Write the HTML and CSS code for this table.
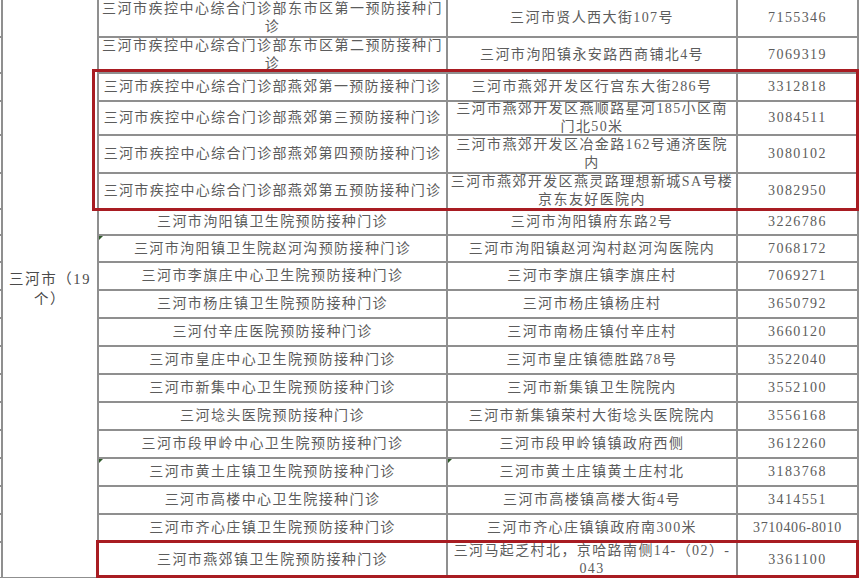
FILE: index.html
```html
<!DOCTYPE html>
<html lang="zh-CN">
<head>
<meta charset="utf-8">
<title>三河市预防接种门诊</title>
<link rel="stylesheet" href="styles.css">
</head>
<body>
<div class="page">
  <table class="grid">
    <colgroup>
      <col class="c0"><col class="c1"><col class="c2"><col class="c3"><col class="c4">
    </colgroup>
    <tbody>
      <tr class="h38"><td class="stub"></td><td class="region" rowspan="19">三河市（19<br>个）</td><td class="wide"><span class="two">三河市疾控中心综合门诊部东市区第一预防接种门<br>诊</span></td><td>三河市贤人西大街107号</td><td>7155346</td></tr>
      <tr class="h36"><td class="stub"></td><td class="wide"><span class="two">三河市疾控中心综合门诊部东市区第二预防接种门<br>诊</span></td><td>三河市泃阳镇永安路西商铺北4号</td><td>7069319</td></tr>
      <tr class="h28"><td class="stub"></td><td class="tight">三河市疾控中心综合门诊部燕郊第一预防接种门诊</td><td>三河市燕郊开发区行宫东大街286号</td><td>3312818</td></tr>
      <tr class="h34"><td class="stub"></td><td class="tight">三河市疾控中心综合门诊部燕郊第三预防接种门诊</td><td><span class="two">三河市燕郊开发区燕顺路星河185小区南<br>门北50米</span></td><td>3084511</td></tr>
      <tr class="h38"><td class="stub"></td><td class="tight">三河市疾控中心综合门诊部燕郊第四预防接种门诊</td><td><span class="two">三河市燕郊开发区冶金路162号通济医院<br>内</span></td><td>3080102</td></tr>
      <tr class="h36"><td class="stub"></td><td class="tight">三河市疾控中心综合门诊部燕郊第五预防接种门诊</td><td><span class="two">三河市燕郊开发区燕灵路理想新城SA号楼<br>京东友好医院内</span></td><td>3082950</td></tr>
      <tr class="h26"><td class="stub"></td><td>三河市泃阳镇卫生院预防接种门诊</td><td>三河市泃阳镇府东路2号</td><td>3226786</td></tr>
      <tr class="h27"><td class="stub"></td><td class="mark">三河市泃阳镇卫生院赵河沟预防接种门诊</td><td>三河市泃阳镇赵河沟村赵河沟医院内</td><td>7068172</td></tr>
      <tr class="h28"><td class="stub"></td><td>三河市李旗庄中心卫生院预防接种门诊</td><td>三河市李旗庄镇李旗庄村</td><td>7069271</td></tr>
      <tr class="h28"><td class="stub"></td><td>三河市杨庄镇卫生院预防接种门诊</td><td>三河市杨庄镇杨庄村</td><td>3650792</td></tr>
      <tr class="h28"><td class="stub"></td><td>三河付辛庄医院预防接种门诊</td><td>三河市南杨庄镇付辛庄村</td><td>3660120</td></tr>
      <tr class="h28"><td class="stub"></td><td>三河市皇庄中心卫生院预防接种门诊</td><td>三河市皇庄镇德胜路78号</td><td>3522040</td></tr>
      <tr class="h28"><td class="stub"></td><td>三河市新集中心卫生院预防接种门诊</td><td>三河市新集镇卫生院院内</td><td>3552100</td></tr>
      <tr class="h28"><td class="stub"></td><td>三河埝头医院预防接种门诊</td><td>三河市新集镇荣村大街埝头医院院内</td><td>3556168</td></tr>
      <tr class="h28"><td class="stub"></td><td>三河市段甲岭中心卫生院预防接种门诊</td><td>三河市段甲岭镇镇政府西侧</td><td>3612260</td></tr>
      <tr class="h28"><td class="stub"></td><td class="mark">三河市黄土庄镇卫生院预防接种门诊</td><td class="mark">三河市黄土庄镇黄土庄村北</td><td>3183768</td></tr>
      <tr class="h28"><td class="stub"></td><td>三河市高楼中心卫生院接种门诊</td><td>三河市高楼镇高楼大街4号</td><td>3414551</td></tr>
      <tr class="h28"><td class="stub"></td><td>三河市齐心庄镇卫生院预防接种门诊</td><td>三河市齐心庄镇镇政府南300米</td><td class="ext">3710406-8010</td></tr>
      <tr class="h36"><td class="stub"></td><td>三河市燕郊镇卫生院预防接种门诊</td><td><span class="two">三河马起乏村北，京哈路南侧14-（02）-<br>043</span></td><td>3361100</td></tr>
    </tbody>
  </table>
  <div class="highlight highlight-top"></div>
  <div class="highlight highlight-bottom"></div>
</div>
</body>
</html>
```

FILE: styles.css
```css
html, body {
  margin: 0;
  padding: 0;
  background: #ffffff;
}

.page {
  position: relative;
  width: 860px;
  height: 578px;
  overflow: hidden;
  background: #ffffff;
}

.grid {
  border-collapse: collapse;
  table-layout: fixed;
  width: 878px;
  margin-left: -20px;
  margin-top: -2px;
  font-family: "Liberation Serif", "Noto Sans CJK SC", serif;
  font-size: 14px;
  color: #5c5c5c;
  letter-spacing: 1.4px;
}

.c0 { width: 22px; }
.c1 { width: 96px; }
.c2 { width: 349px; }
.c3 { width: 290px; }
.c4 { width: 121px; }

.grid td {
  border: 2px solid #8f8f8f;
  text-align: center;
  vertical-align: middle;
  padding: 0 2px;
  line-height: 18px;
  white-space: nowrap;
  position: relative;
}

.grid td.stub {
  border-left: none;
}

.grid td.region {
  text-align: center;
  color: #4a4a4a;
  font-size: 14.5px;
  line-height: 20px;
  letter-spacing: 1.6px;
}

.grid td.wide {
  letter-spacing: 1.5px;
}

.grid td.tight {
  letter-spacing: 1.35px;
}

.grid td.ext {
  letter-spacing: 0.6px;
}

/* two-line cell text: lines sit 18-19px apart and may touch the cell borders, as in the source sheet */
.two {
  display: block;
  line-height: 18.5px;
  margin: -5px 0;
}

.h26 { height: 26px; }
.h27 { height: 27px; }
.h28 { height: 28px; }
.h34 { height: 34px; }
.h36 { height: 36px; }
.h38 { height: 38px; }

.grid td.mark::before {
  content: "";
  position: absolute;
  left: 0;
  top: 0;
  width: 0;
  height: 0;
  border-top: 4px solid #2f5a2a;
  border-right: 4px solid transparent;
}

.highlight {
  position: absolute;
  border: 3px solid #a81c22;
  box-sizing: border-box;
}

.highlight-top {
  left: 92px;
  top: 69px;
  width: 767px;
  height: 142px;
}

.highlight-bottom {
  left: 96px;
  top: 540px;
  width: 763px;
  height: 38px;
}
```
